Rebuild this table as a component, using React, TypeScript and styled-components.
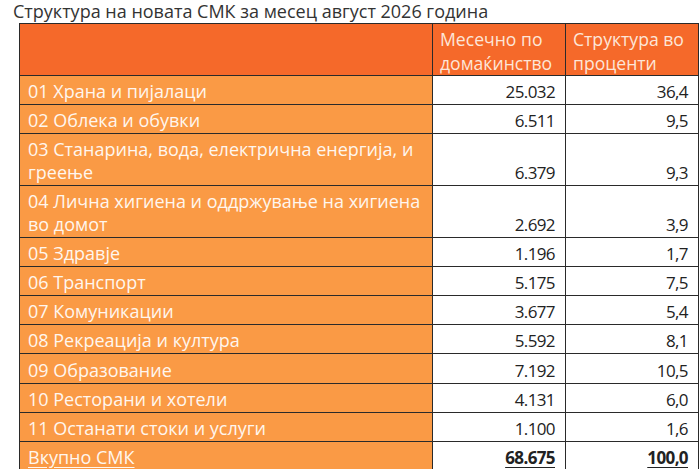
import React from 'react'
import styled, { createGlobalStyle, css } from 'styled-components'

const GlobalStyle = createGlobalStyle`
  html, body {
    margin: 0;
    padding: 0;
    background: #ffffff;
  }
  body {
    font-family: "Open Sans", "Liberation Sans", sans-serif;
    overflow: hidden;
  }
`

const Page = styled.div`
  width: 700px;
  height: 469px;
  overflow: hidden;
  background: #fff;
`

const Title = styled.h1`
  margin: 0;
  padding: 1px 0 0 13px;
  height: 23px;
  box-sizing: border-box;
  font-size: 18px;
  font-weight: 400;
  line-height: 21px;
  color: #333333;
  white-space: nowrap;
`

const Sheet = styled.div`
  margin-left: 19px;
  display: grid;
  grid-template-columns: 413px 133px 133px;
  border-top: 1.5px solid #2a2a2a;
  border-left: 1.5px solid #2a2a2a;
  width: 679px;
`

const HeadCell = styled.div`
  box-sizing: border-box;
  height: 52px;
  background: #f5692a;
  color: #fde6d8;
  font-size: 17.6px;
  line-height: 24px;
  padding: 3px 0 0 7px;
  border-right: 1.5px solid #2a2a2a;
  border-bottom: 1.5px solid #2a2a2a;
`

const rowHeight = css<{ $tall?: boolean }>`
  height: ${p => (p.$tall ? '51.6px' : '29.2px')};
`

const LabelCell = styled.div<{ $tall?: boolean; $total?: boolean }>`
  box-sizing: border-box;
  ${rowHeight};
  background: #fa9a45;
  color: #fff6ee;
  font-size: 18px;
  line-height: 23px;
  padding: 0 4px 1px 8px;
  display: flex;
  align-items: flex-end;
  border-right: 1.5px solid #2a2a2a;
  border-bottom: 1.5px solid #2a2a2a;
  span {
    text-decoration: ${p => (p.$total ? 'underline' : 'none')};
    text-underline-offset: 3px;
  }
`

const NumCell = styled.div<{ $tall?: boolean; $total?: boolean }>`
  box-sizing: border-box;
  ${rowHeight};
  background: #ffffff;
  color: #222222;
  font-size: 17px;
  letter-spacing: -0.6px;
  line-height: 23px;
  font-weight: ${p => (p.$total ? 700 : 400)};
  padding: 0 10px 1px 0;
  display: flex;
  align-items: flex-end;
  justify-content: flex-end;
  border-right: 1.5px solid #2a2a2a;
  border-bottom: 1.5px solid #2a2a2a;
  span {
    text-decoration: ${p => (p.$total ? 'underline' : 'none')};
    text-underline-offset: 3px;
  }
`

type Row = { label: string; monthly: string; share: string; tall?: boolean; total?: boolean }

const rows: Row[] = [
  { label: '01 Храна и пијалаци', monthly: '25.032', share: '36,4' },
  { label: '02 Облека и обувки', monthly: '6.511', share: '9,5' },
  { label: '03 Станарина, вода, електрична енергија, и греење', monthly: '6.379', share: '9,3', tall: true },
  { label: '04 Лична хигиена и оддржување на хигиена во домот', monthly: '2.692', share: '3,9', tall: true },
  { label: '05 Здравје', monthly: '1.196', share: '1,7' },
  { label: '06 Транспорт', monthly: '5.175', share: '7,5' },
  { label: '07 Комуникации', monthly: '3.677', share: '5,4' },
  { label: '08 Рекреација и култура', monthly: '5.592', share: '8,1' },
  { label: '09 Образование', monthly: '7.192', share: '10,5' },
  { label: '10 Ресторани и хотели', monthly: '4.131', share: '6,0' },
  { label: '11 Останати стоки и услуги', monthly: '1.100', share: '1,6' },
  { label: 'Вкупно СМК', monthly: '68.675', share: '100,0', total: true },
]

export default function App() {
  return (
    <Page>
      <GlobalStyle />
      <Title>Структура на новата СМК за месец август 2026 година</Title>
      <Sheet>
        <HeadCell />
        <HeadCell>Месечно по домаќинство</HeadCell>
        <HeadCell>Структура во проценти</HeadCell>
        {rows.map(r => (
          <React.Fragment key={r.label}>
            <LabelCell $tall={r.tall} $total={r.total}><span>{r.label}</span></LabelCell>
            <NumCell $tall={r.tall} $total={r.total}><span>{r.monthly}</span></NumCell>
            <NumCell $tall={r.tall} $total={r.total}><span>{r.share}</span></NumCell>
          </React.Fragment>
        ))}
      </Sheet>
    </Page>
  )
}
